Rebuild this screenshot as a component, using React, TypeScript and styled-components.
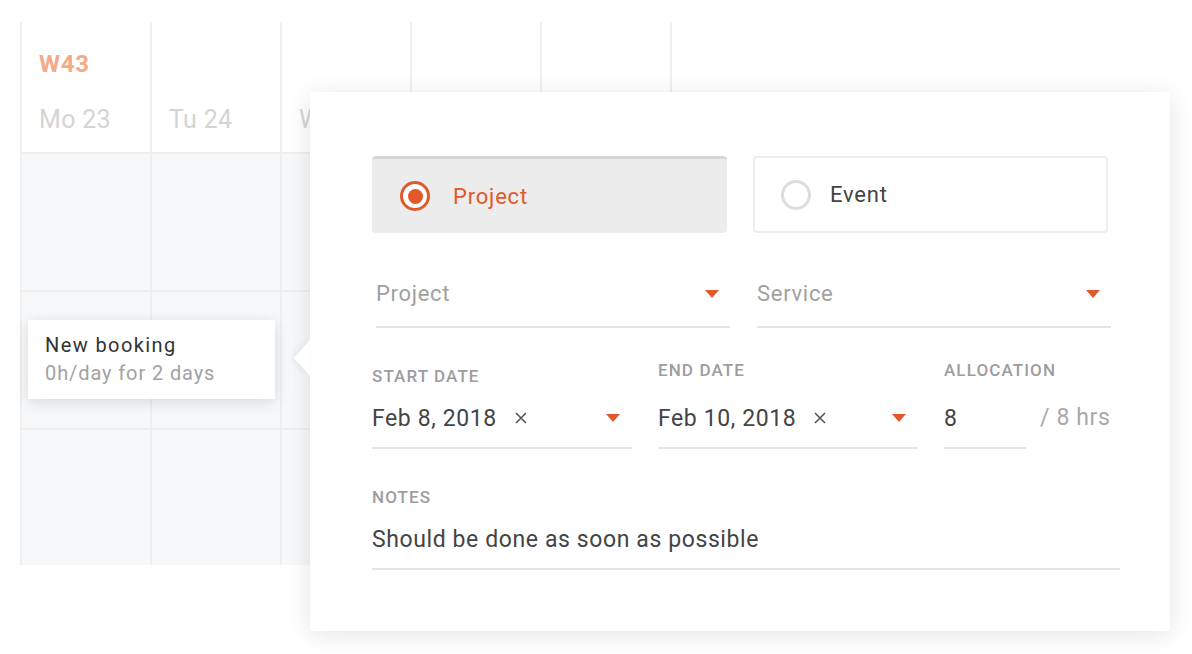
import styled, { createGlobalStyle } from 'styled-components';

const GlobalStyle = createGlobalStyle`
  html, body {
    margin: 0;
    padding: 0;
    background: #ffffff;
    font-family: Roboto, "Liberation Sans", sans-serif;
    -webkit-font-smoothing: antialiased;
  }
`;

const ORANGE = '#e2582a';

const Page = styled.div`
  position: relative;
  width: 1192px;
  height: 654px;
  overflow: hidden;
  background: #fff;
`;

const Calendar = styled.div`
  margin: 22px 0 0 20px;
  width: 650px;
  display: grid;
  grid-template-columns: repeat(5, 130px);
  grid-template-rows: 130px 138px 138px 137px;
  border-right: 2px solid #efefef;
`;

const HeaderCell = styled.div`
  border-left: 2px solid #efefef;
  padding: 28px 0 0 17px;
  display: flex;
  flex-direction: column;
  gap: 27px;
`;

const WeekLabel = styled.div`
  font-size: 24px;
  line-height: 28px;
  height: 28px;
  font-weight: 700;
  color: #f5aa87;
  letter-spacing: 0.8px;
`;

const DayLabel = styled.div`
  font-size: 25px;
  line-height: 30px;
  color: #d4d4d4;
  letter-spacing: 0.3px;
`;

const BodyCell = styled.div`
  border-left: 2px solid #efefef;
  border-top: 2px solid #efefef;
  background: #f7f8fa;
`;

const Tooltip = styled.div`
  position: absolute;
  left: 28px;
  top: 320px;
  width: 247px;
  height: 79px;
  box-sizing: border-box;
  padding: 11px 17px;
  background: #fff;
  box-shadow: 0 3px 14px rgba(0, 0, 0, 0.13);
`;

const TooltipLine = styled.div<{ $muted?: boolean }>`
  font-size: 20px;
  line-height: 28px;
  color: ${p => (p.$muted ? '#a2a2a2' : '#333')};
  letter-spacing: ${p => (p.$muted ? 0.9 : 1.4)}px;
  white-space: nowrap;
`;

const Popover = styled.div`
  position: absolute;
  left: 310px;
  top: 92px;
  width: 860px;
  height: 539px;
  box-sizing: border-box;
  padding: 64px 63px 0 62px;
  background: #fff;
  border-radius: 3px;
  box-shadow: 0 4px 26px rgba(0, 0, 0, 0.11);

  &::before {
    content: '';
    position: absolute;
    left: -16px;
    top: 248px;
    border-top: 18px solid transparent;
    border-bottom: 18px solid transparent;
    border-right: 16px solid #fff;
    filter: drop-shadow(-3px 0 3px rgba(0, 0, 0, 0.06));
  }
`;

const TypeRow = styled.div`
  display: grid;
  grid-template-columns: 355px 355px;
  gap: 26px;
`;

const TypeCard = styled.div<{ $active?: boolean }>`
  height: 77px;
  box-sizing: border-box;
  display: flex;
  align-items: center;
  gap: ${p => (p.$active ? 23 : 19)}px;
  padding-left: ${p => (p.$active ? 28 : 26)}px;
  border-radius: 4px;
  background: ${p => (p.$active ? '#ececec' : '#fff')};
  border: ${p => (p.$active ? 'none' : '2px solid #eeeeee')};
  border-top: ${p => (p.$active ? '3px solid #d6d6d6' : '2px solid #eeeeee')};
  font-size: 22px;
  letter-spacing: 0.8px;
  color: ${p => (p.$active ? ORANGE : '#444')};
`;

const Radio = styled.span<{ $active?: boolean }>`
  width: 30px;
  height: 30px;
  box-sizing: border-box;
  border-radius: 50%;
  border: 3px solid ${p => (p.$active ? ORANGE : '#dddddd')};
  display: flex;
  align-items: center;
  justify-content: center;
  background: #fff;

  &::after {
    content: '';
    display: ${p => (p.$active ? 'block' : 'none')};
    width: 15px;
    height: 15px;
    border-radius: 50%;
    background: ${ORANGE};
  }
`;

const SelectRow = styled.div`
  margin: 28px 0 0 4px;
  display: grid;
  grid-template-columns: 354px 354px;
  gap: 27px;
`;

const SelectField = styled.div`
  height: 65px;
  display: flex;
  align-items: center;
  justify-content: space-between;
  padding-right: 11px;
  border-bottom: 2px solid #e4e4e4;
  font-size: 22px;
  letter-spacing: 0.7px;
  color: #a0a0a0;
`;

const Caret = styled.span`
  width: 0;
  height: 0;
  border-left: 7px solid transparent;
  border-right: 7px solid transparent;
  border-top: 8px solid ${ORANGE};
`;

const DetailsRow = styled.div`
  margin-top: 32px;
  display: grid;
  grid-template-columns: 260px 260px 1fr;
  column-gap: 26px;
  align-items: start;
`;

const Field = styled.div`
  display: flex;
  flex-direction: column;
`;

const Label = styled.div<{ $drop?: number; $gap?: number }>`
  font-size: 17px;
  line-height: 20px;
  font-weight: 500;
  color: #9d9d9d;
  letter-spacing: 1.1px;
  margin-top: ${p => p.$drop || 0}px;
  margin-bottom: ${p => (p.$gap === undefined ? 24 : p.$gap)}px;
`;

const ValueLine = styled.div<{ $width?: number }>`
  display: flex;
  align-items: center;
  height: 28px;
  padding-bottom: 15px;
  border-bottom: 2px solid #e4e4e4;
  font-size: 23px;
  letter-spacing: 0.6px;
  color: #444;
  white-space: nowrap;
  width: ${p => (p.$width ? `${p.$width}px` : 'auto')};
`;

const Clear = styled.svg`
  margin-left: 18px;
  width: 12px;
  height: 12px;
  stroke: #555;
  stroke-width: 1.6;
`;

const Spacer = styled.span`
  flex: 1;
`;

const DateCaret = styled(Caret)`
  margin-right: 12px;
`;

const AllocationWrap = styled.div`
  display: flex;
  align-items: flex-start;
`;

const Hours = styled.div`
  margin-left: 14px;
  font-size: 23px;
  line-height: 28px;
  letter-spacing: 0.6px;
  color: #a8a8a8;
  white-space: nowrap;
`;

const NotesField = styled.div`
  margin-top: 38px;
  width: 748px;
`;

function ClearIcon() {
  return (
    <Clear viewBox="0 0 12 12">
      <path d="M1 1 L11 11 M11 1 L1 11" />
    </Clear>
  );
}

export default function App() {
  const days = ['Mo 23', 'Tu 24', 'We 25', 'Th 26', 'Fr 27'];

  return (
    <Page>
      <GlobalStyle />
      <Calendar>
        {days.map((d, i) => (
          <HeaderCell key={d}>
            <WeekLabel>{i === 0 ? 'W43' : ''}</WeekLabel>
            <DayLabel>{d}</DayLabel>
          </HeaderCell>
        ))}
        {Array.from({ length: 15 }).map((_, i) => (
          <BodyCell key={i} />
        ))}
      </Calendar>

      <Tooltip>
        <TooltipLine>New booking</TooltipLine>
        <TooltipLine $muted>0h/day for 2 days</TooltipLine>
      </Tooltip>

      <Popover>
        <TypeRow>
          <TypeCard $active>
            <Radio $active />
            Project
          </TypeCard>
          <TypeCard>
            <Radio />
            Event
          </TypeCard>
        </TypeRow>

        <SelectRow>
          <SelectField>
            Project
            <Caret />
          </SelectField>
          <SelectField>
            Service
            <Caret />
          </SelectField>
        </SelectRow>

        <DetailsRow>
          <Field>
            <Label $drop={6} $gap={18}>START DATE</Label>
            <ValueLine>
              Feb 8, 2018
              <ClearIcon />
              <Spacer />
              <DateCaret />
            </ValueLine>
          </Field>
          <Field>
            <Label>END DATE</Label>
            <ValueLine>
              Feb 10, 2018
              <ClearIcon />
              <Spacer />
              <DateCaret />
            </ValueLine>
          </Field>
          <Field>
            <Label>ALLOCATION</Label>
            <AllocationWrap>
              <ValueLine $width={82}>8</ValueLine>
              <Hours>/ 8 hrs</Hours>
            </AllocationWrap>
          </Field>
        </DetailsRow>

        <NotesField>
          <Label $gap={18}>NOTES</Label>
          <ValueLine>Should be done as soon as possible</ValueLine>
        </NotesField>
      </Popover>
    </Page>
  );
}
